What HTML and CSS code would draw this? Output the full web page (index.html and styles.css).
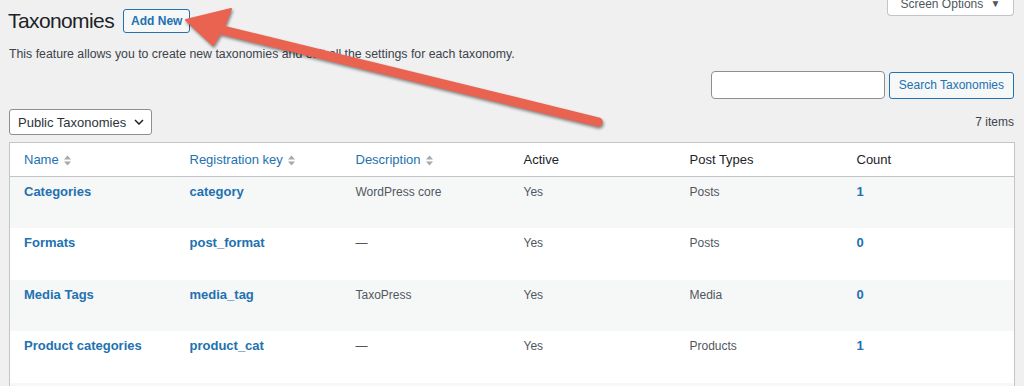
FILE: index.html
```html
<!DOCTYPE html>
<html lang="en">
<head>
    <meta charset="UTF-8">
    <meta name="viewport" content="width=device-width, initial-scale=1.0">
    <title>Taxonomies</title>
    <link rel="stylesheet" href="styles.css">
</head>
<body>
    <div class="wrap">
        <div class="page-head">
            <h1 class="page-title">Taxonomies</h1>
            <a class="btn-add" href="#">Add New</a>
            <button class="screen-options">Screen Options <span class="caret">&#9660;</span></button>
        </div>

        <p class="intro">This feature allows you to create new taxonomies and edit all the settings for each taxonomy.</p>

        <div class="search-row">
            <input type="search" class="search-input">
            <button class="btn-secondary">Search Taxonomies</button>
        </div>

        <div class="tablenav">
            <div class="select-box">
                Public Taxonomies
                <svg class="chevron" width="10" height="6" viewBox="0 0 10 6"><path d="M1 1l4 4 4-4" fill="none" stroke="#1d2327" stroke-width="1.5"/></svg>
            </div>
            <span class="items-count">7 items</span>
        </div>

        <table class="list-table">
            <colgroup>
                <col class="col-name">
                <col class="col-key">
                <col class="col-desc">
                <col class="col-active">
                <col class="col-types">
                <col>
            </colgroup>
            <thead>
                <tr>
                    <th><a href="#" class="sortable">Name <svg class="sort" width="7" height="11" viewBox="0 0 7 11"><path d="M0 4.5L3.5 0.5 7 4.5z M0 6.5h7L3.5 10.5z" fill="#a7aaad"/></svg></a></th>
                    <th><a href="#" class="sortable">Registration key <svg class="sort" width="7" height="11" viewBox="0 0 7 11"><path d="M0 4.5L3.5 0.5 7 4.5z M0 6.5h7L3.5 10.5z" fill="#a7aaad"/></svg></a></th>
                    <th><a href="#" class="sortable">Description <svg class="sort" width="7" height="11" viewBox="0 0 7 11"><path d="M0 4.5L3.5 0.5 7 4.5z M0 6.5h7L3.5 10.5z" fill="#a7aaad"/></svg></a></th>
                    <th>Active</th>
                    <th>Post Types</th>
                    <th>Count</th>
                </tr>
            </thead>
            <tbody>
                <tr>
                    <td><a href="#" class="strong">Categories</a></td>
                    <td><a href="#" class="strong">category</a></td>
                    <td>WordPress core</td>
                    <td>Yes</td>
                    <td>Posts</td>
                    <td><a href="#" class="strong">1</a></td>
                </tr>
                <tr>
                    <td><a href="#" class="strong">Formats</a></td>
                    <td><a href="#" class="strong">post_format</a></td>
                    <td>&mdash;</td>
                    <td>Yes</td>
                    <td>Posts</td>
                    <td><a href="#" class="strong">0</a></td>
                </tr>
                <tr>
                    <td><a href="#" class="strong">Media Tags</a></td>
                    <td><a href="#" class="strong">media_tag</a></td>
                    <td>TaxoPress</td>
                    <td>Yes</td>
                    <td>Media</td>
                    <td><a href="#" class="strong">0</a></td>
                </tr>
                <tr>
                    <td><a href="#" class="strong">Product categories</a></td>
                    <td><a href="#" class="strong">product_cat</a></td>
                    <td>&mdash;</td>
                    <td>Yes</td>
                    <td>Products</td>
                    <td><a href="#" class="strong">1</a></td>
                </tr>
                <tr>
                    <td><a href="#" class="strong">Product tags</a></td>
                    <td><a href="#" class="strong">product_tag</a></td>
                    <td>&mdash;</td>
                    <td>Yes</td>
                    <td>Products</td>
                    <td><a href="#" class="strong">0</a></td>
                </tr>
                <tr>
                    <td><a href="#" class="strong">Tags</a></td>
                    <td><a href="#" class="strong">post_tag</a></td>
                    <td>WordPress core</td>
                    <td>Yes</td>
                    <td>Posts</td>
                    <td><a href="#" class="strong">0</a></td>
                </tr>
            </tbody>
        </table>
    </div>

    <!-- annotation arrow drawn over the page -->
    <svg class="arrow" width="1024" height="386" viewBox="0 0 1024 386">
        <g fill="#ea6350" stroke="#ea6350" stroke-linejoin="round">
            <line x1="218" y1="29" x2="598" y2="122" stroke-width="9.5" stroke-linecap="round"/>
            <polygon points="186,20 231,9 224,27 213,45" stroke-width="2"/>
        </g>
    </svg>
</body>
</html>
```

FILE: styles.css
```css
body {
    font-family: 'Liberation Sans', Arial, sans-serif;
    font-size: 12px;
    background-color: #f0f0f1;
    color: #3c434a;
    margin: 0;
    padding: 0;
    overflow: hidden;
}

a {
    color: #2271b1;
    text-decoration: none;
}

.wrap {
    padding: 0 9px 0 9px;
}

.page-head {
    display: flex;
    align-items: center;
    padding-top: 9px;
}

.page-title {
    margin: 0 9px 0 -1px;
    font-size: 21px;
    font-weight: 400;
    letter-spacing: -0.6px;
    color: #1d2327;
    line-height: 24px;
}

.btn-add {
    border: 1px solid #2271b1;
    border-radius: 3px;
    background: #f6f7f7;
    padding: 0 7px;
    height: 22px;
    line-height: 22px;
    font-weight: 700;
    font-size: 12px;
}

.screen-options {
    margin-left: auto;
    margin-right: 1px;
    align-self: flex-start;
    margin-top: -21px;
    height: 28px;
    width: 127px;
    padding: 4px 0 0;
    background: #fff;
    border: 1px solid #c3c4c7;
    border-top: none;
    border-radius: 0 0 4px 4px;
    font-family: inherit;
    font-size: 12px;
    color: #50575e;
}

.caret {
    font-size: 10px;
    margin-left: 4px;
    vertical-align: 1px;
}

.intro {
    margin: 12px 0 0;
    line-height: 18px;
    font-size: 12.3px;
}

.search-row {
    display: flex;
    justify-content: flex-end;
    align-items: center;
    gap: 4px;
    margin-top: 8px;
    padding-right: 1px;
}

.search-input {
    width: 174px;
    height: 28px;
    box-sizing: border-box;
    border: 1px solid #8c8f94;
    border-radius: 4px;
    background: #fff;
}

.btn-secondary {
    height: 27px;
    padding: 0 9px;
    border: 1px solid #2271b1;
    border-radius: 3px;
    background: #f6f7f7;
    color: #2271b1;
    font-family: inherit;
    font-size: 12px;
}

.tablenav {
    display: flex;
    align-items: center;
    justify-content: space-between;
    margin-top: 10px;
    padding-right: 1px;
}

.select-box {
    display: flex;
    align-items: center;
    justify-content: space-between;
    width: 143px;
    height: 26px;
    box-sizing: border-box;
    padding: 0 7px 0 8px;
    background: #fff;
    border: 1px solid #8c8f94;
    border-radius: 3px;
    color: #2c3338;
    font-size: 13px;
}

.items-count {
    color: #3c434a;
}

.list-table {
    width: 100%;
    margin-top: 7px;
    border-collapse: collapse;
    table-layout: fixed;
    border: 1px solid #c3c4c7;
}

.col-name { width: 170px; }
.col-key { width: 166px; }
.col-desc { width: 168px; }
.col-active { width: 166px; }
.col-types { width: 167px; }

.list-table th {
    background: #fff;
    text-align: left;
    font-weight: 400;
    font-size: 13px;
    color: #1d2327;
    padding: 8px 10px 7px;
    line-height: 18px;
    border-bottom: 1px solid #c3c4c7;
}

.list-table td {
    padding: 6px 10px 0;
    line-height: 18px;
    vertical-align: top;
    color: #50575e;
}

.list-table th:first-child,
.list-table td:first-child {
    padding-left: 14px;
}

.list-table tbody tr {
    height: 51.6px;
    background: #fff;
}

.list-table tbody tr:nth-child(odd) {
    background: #f6f7f7;
}

.sortable {
    display: inline-flex;
    align-items: center;
    gap: 5px;
}

.strong {
    font-weight: 700;
    font-size: 13px;
}

.arrow {
    position: absolute;
    left: 0;
    top: 0;
    pointer-events: none;
    filter: drop-shadow(1px 2px 1.5px rgba(0, 0, 0, 0.45));
}
```
